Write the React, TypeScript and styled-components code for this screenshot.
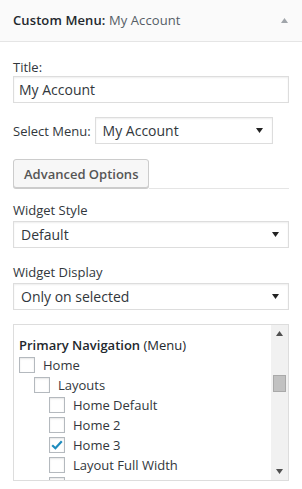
import React from 'react';
import styled, { createGlobalStyle } from 'styled-components';

const GlobalStyle = createGlobalStyle`
  html, body {
    margin: 0;
    padding: 0;
    background: #fff;
  }
  body {
    font-family: "Open Sans", "Noto Sans", sans-serif;
    font-size: 13px;
    color: #23282d;
  }
`;

const Widget = styled.div`
  width: 302px;
  background: #fff;
`;

const WidgetTop = styled.div`
  height: 41px;
  display: flex;
  align-items: center;
  justify-content: space-between;
  padding: 0 14px 0 13px;
  background: #fafafa;
  border-bottom: 1px solid #e5e5e5;
`;

const WidgetTitle = styled.h3`
  margin: 0;
  font-size: 13px;
  font-weight: 600;
  letter-spacing: 0.1px;
  color: #23282d;
  line-height: 1;
`;

const InTitle = styled.span`
  font-weight: 400;
  color: #555d66;
`;

const Inside = styled.div`
  padding: 16px 13px 0;
`;

const Label = styled.label`
  display: block;
  line-height: 18px;
  color: #32373c;
`;

const TextInput = styled.input`
  display: block;
  width: 100%;
  box-sizing: border-box;
  height: 27px;
  margin: 0;
  padding: 0 5px;
  border: 1px solid #ddd;
  box-shadow: inset 0 1px 2px rgba(0, 0, 0, 0.07);
  font-family: inherit;
  font-size: 14px;
  color: #32373c;
  outline: none;
`;

const InlineRow = styled.div<{ $top: number }>`
  display: flex;
  align-items: center;
  gap: 4px;
  margin-top: ${p => p.$top}px;
`;

const SelectBox = styled.div<{ $width?: number }>`
  display: flex;
  align-items: center;
  justify-content: space-between;
  box-sizing: border-box;
  width: ${p => (p.$width ? `${p.$width}px` : '100%')};
  height: 27px;
  padding: 0 9px 0 7px;
  border: 1px solid #ddd;
  background: #fff;
  box-shadow: inset 0 1px 2px rgba(0, 0, 0, 0.07);
  font-size: 14px;
  color: #32373c;
`;

const ButtonRow = styled.div`
  display: flex;
  margin-top: 15px;
`;

const Button = styled.button`
  box-sizing: border-box;
  height: 29px;
  padding: 0 10px;
  border: 1px solid #ccc;
  border-radius: 3px;
  background: #f7f7f7;
  box-shadow: 0 1px 0 #ccc;
  font-family: inherit;
  font-size: 13px;
  font-weight: 600;
  color: #555;
`;

const Rule = styled.div`
  flex: 1;
  border-bottom: 1px solid #e5e5e5;
  margin-bottom: -1px;
`;

const FieldLabel = styled(Label)<{ $top: number }>`
  margin-top: ${p => p.$top}px;
  margin-bottom: 2px;
`;

const ListBox = styled.div`
  display: flex;
  box-sizing: border-box;
  height: 157px;
  margin-top: 14px;
  border: 1px solid #ddd;
  overflow: hidden;
`;

const ListContent = styled.div`
  flex: 1;
  padding: 10px 0 0 5px;
  overflow: hidden;
`;

const MenuHeading = styled.div`
  line-height: 20px;
  color: #23282d;
`;

const Strong = styled.strong`
  font-weight: 600;
`;

const Item = styled.div<{ $level: number }>`
  display: flex;
  align-items: center;
  gap: 8px;
  height: 20px;
  padding-left: ${p => p.$level * 15}px;
  color: #32373c;
  white-space: nowrap;
`;

const Box = styled.span`
  display: inline-flex;
  align-items: center;
  justify-content: center;
  box-sizing: border-box;
  width: 16px;
  height: 16px;
  border: 1px solid #b4b9be;
  background: #fff;
  box-shadow: inset 0 1px 2px rgba(0, 0, 0, 0.1);
  flex-shrink: 0;
`;

const Scrollbar = styled.div`
  width: 17px;
  display: flex;
  flex-direction: column;
  align-items: center;
  background: #f1f1f1;
`;

const ArrowCell = styled.div`
  height: 17px;
  display: flex;
  align-items: center;
  justify-content: center;
`;

const Thumb = styled.div`
  width: 13px;
  height: 17px;
  margin-top: 33px;
  box-sizing: border-box;
  background: #c1c1c1;
  border: 1px solid #a9a9a9;
`;

const Track = styled.div`
  flex: 1;
`;

const DownTri = ({ color = '#222' }: { color?: string }) => (
  <svg width="7" height="6" viewBox="0 0 7 6">
    <path d="M0 0 H7 L3.5 5 Z" fill={color} />
  </svg>
);

const UpTri = ({ color }: { color: string }) => (
  <svg width="7" height="5" viewBox="0 0 7 5">
    <path d="M0 5 H7 L3.5 0 Z" fill={color} />
  </svg>
);

const Check = () => (
  <svg width="12" height="10" viewBox="0 0 12 10">
    <path d="M1.2 5.2 L4.4 8.2 L10.8 1.2" fill="none" stroke="#1e8cbe" strokeWidth="2.2" />
  </svg>
);

// the last row is scrolled just past the visible edge: only its box peeks in
const items = [
  { label: 'Home', level: 0, checked: false },
  { label: 'Layouts', level: 1, checked: false },
  { label: 'Home Default', level: 2, checked: false },
  { label: 'Home 2', level: 2, checked: false },
  { label: 'Home 3', level: 2, checked: true },
  { label: 'Layout Full Width', level: 2, checked: false },
  { label: '', level: 2, checked: false },
];

export default function App() {
  return (
    <>
      <GlobalStyle />
      <Widget>
        <WidgetTop>
          <WidgetTitle>
            Custom Menu: <InTitle>My Account</InTitle>
          </WidgetTitle>
          <UpTri color="#a0a5aa" />
        </WidgetTop>

        <Inside>
          <Label>Title:</Label>
          <TextInput defaultValue="My Account" />

          <InlineRow $top={14}>
            <Label>Select Menu:</Label>
            <SelectBox $width={178}>
              My Account
              <DownTri />
            </SelectBox>
          </InlineRow>

          <ButtonRow>
            <Button>Advanced Options</Button>
            <Rule />
          </ButtonRow>

          <FieldLabel $top={13}>Widget Style</FieldLabel>
          <SelectBox>
            Default
            <DownTri />
          </SelectBox>

          <FieldLabel $top={15}>Widget Display</FieldLabel>
          <SelectBox>
            Only on selected
            <DownTri />
          </SelectBox>

          <ListBox>
            <ListContent>
              <MenuHeading>
                <Strong>Primary Navigation</Strong> (Menu)
              </MenuHeading>
              {items.map((it, i) => (
                <Item key={i} $level={it.level}>
                  <Box>{it.checked && <Check />}</Box>
                  {it.label}
                </Item>
              ))}
            </ListContent>
            <Scrollbar>
              <ArrowCell>
                <UpTri color="#505050" />
              </ArrowCell>
              <Thumb />
              <Track />
              <ArrowCell>
                <DownTri color="#505050" />
              </ArrowCell>
            </Scrollbar>
          </ListBox>
        </Inside>
      </Widget>
    </>
  );
}
